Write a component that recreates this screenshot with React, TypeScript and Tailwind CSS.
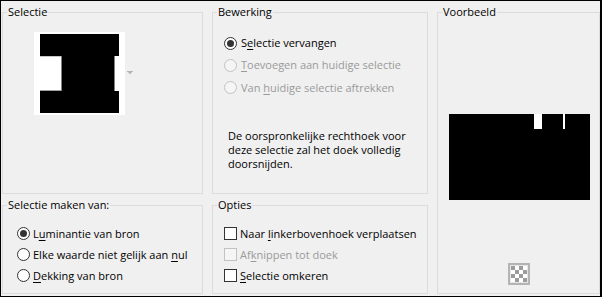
import type { ReactNode } from 'react';

const font = { fontFamily: '"Open Sans", "Segoe UI", sans-serif' };

function Group({
  title,
  className,
  children,
}: {
  title: string;
  className?: string;
  children: ReactNode;
}) {
  return (
    <fieldset className={`border border-[#dcdcdc] p-0 m-0 min-w-0 ${className ?? ''}`}>
      <legend className="ml-[4px] px-[1px] text-[11px] leading-[16px] text-black">{title}</legend>
      {children}
    </fieldset>
  );
}

function Radio({ checked, disabled }: { checked?: boolean; disabled?: boolean }) {
  return (
    <span
      className={`flex items-center justify-center w-[13px] h-[13px] rounded-full border shrink-0 ${
        disabled ? 'border-[#c2c2c2] bg-[#f5f5f5]' : 'border-[#333333] bg-white'
      }`}
    >
      {checked && <span className="w-[7px] h-[7px] rounded-full bg-[#333333]" />}
    </span>
  );
}

function Check({ disabled }: { disabled?: boolean }) {
  return (
    <span
      className={`w-[13px] h-[13px] border shrink-0 ${
        disabled ? 'border-[#c2c2c2] bg-[#f5f5f5]' : 'border-[#333333] bg-white'
      }`}
    />
  );
}

function Label({ pre, key1, post, disabled }: { pre: string; key1: string; post: string; disabled?: boolean }) {
  return (
    <span className={`text-[11px] leading-[16px] whitespace-nowrap ${disabled ? 'text-[#9a9a9a]' : 'text-black'}`}>
      {pre}
      <u className="underline-offset-[2px]">{key1}</u>
      {post}
    </span>
  );
}

function SelectionThumb() {
  return (
    <div className="flex items-start">
      <svg width="91" height="83" viewBox="0 0 91 83">
        <rect x="0" y="0" width="91" height="83" fill="#fff" />
        <rect x="6" y="2" width="79" height="79" fill="#000" />
        <rect x="6" y="24" width="21" height="35" fill="#fff" />
        <rect x="80" y="24" width="5" height="35" fill="#fff" />
        <line x1="27.5" y1="24" x2="27.5" y2="59" stroke="#808080" strokeWidth="1" />
        <line x1="6" y1="24.5" x2="27" y2="24.5" stroke="#c8c8c8" strokeWidth="1" />
        <line x1="6" y1="58.5" x2="27" y2="58.5" stroke="#a0a0a0" strokeWidth="1" />
        <line x1="80.5" y1="24" x2="80.5" y2="59" stroke="#808080" strokeWidth="1" />
      </svg>
      <svg width="6" height="4" viewBox="0 0 6 4" className="mt-[39px] ml-[2px]">
        <rect x="0" y="0" width="6" height="1" fill="#b4b4b4" />
        <path d="M1 1 L5 1 L3 3.5 Z" fill="#b4b4b4" />
      </svg>
    </div>
  );
}

function Preview() {
  return (
    <svg width="141" height="86" viewBox="0 0 141 86">
      <rect x="0" y="0" width="141" height="86" fill="#000" />
      <rect x="85" y="0" width="8" height="15" fill="#fff" />
      <rect x="114" y="0" width="2" height="15" fill="#fff" />
    </svg>
  );
}

function Checker() {
  return (
    <div className="w-[22px] h-[22px] border-2 border-[#b4b4b4] bg-[#e6e6e6] flex items-center justify-center">
      <svg width="16" height="16" viewBox="0 0 16 16">
        <rect width="16" height="16" fill="#fff" />
        {[0, 1, 2, 3].map((r) =>
          [0, 1, 2, 3].map((c) =>
            (r + c) % 2 === 0 ? <rect key={`${r}-${c}`} x={c * 4} y={r * 4} width="4" height="4" fill="#9c9c9c" /> : null
          )
        )}
      </svg>
    </div>
  );
}

export default function App() {
  return (
    <div
      style={font}
      className="w-[602px] h-[297px] bg-[#f0f0f0] border-t border-l border-b border-r-2 border-black pl-[1px] pt-[3px] pb-[2px] grid grid-cols-[201px_216px_163px] grid-rows-[190px_97px] gap-x-[9px] gap-y-[3px]"
    >
      <Group title="Selectie">
        <div className="pl-[31px] pt-[12px]">
          <SelectionThumb />
        </div>
      </Group>

      <Group title="Bewerking">
        <div className="pl-[11px] pt-[12px] flex flex-col">
          <div className="h-[22px] flex items-center gap-[4px]">
            <Radio checked />
            <Label pre="S" key1="e" post="lectie vervangen" />
          </div>
          <div className="h-[22px] flex items-center gap-[4px]">
            <Radio disabled />
            <Label pre="" key1="T" post="oevoegen aan huidige selectie" disabled />
          </div>
          <div className="h-[23px] flex items-center gap-[4px]">
            <Radio disabled />
            <Label pre="Van " key1="h" post="uidige selectie aftrekken" disabled />
          </div>
          <p className="mt-[30px] pl-[4px] text-[11px] leading-[14px] text-black">
            De oorspronkelijke rechthoek voor
            <br />
            deze selectie zal het doek volledig
            <br />
            doorsnijden.
          </p>
        </div>
      </Group>

      <Group title="Voorbeeld" className="row-span-2">
        <div className="flex flex-col items-center pt-[94px] pl-[1px]">
          <Preview />
          <div className="mt-[63px]">
            <Checker />
          </div>
        </div>
      </Group>

      <Group title="Selectie maken van:">
        <div className="pl-[14px] pt-[10px] flex flex-col">
          <div className="h-[21px] flex items-center gap-[3px]">
            <Radio checked />
            <Label pre="L" key1="u" post="minantie van bron" />
          </div>
          <div className="h-[21px] flex items-center gap-[3px]">
            <Radio />
            <Label pre="Elke waarde niet gelijk aan " key1="n" post="ul" />
          </div>
          <div className="h-[21px] flex items-center gap-[3px]">
            <Radio />
            <Label pre="" key1="D" post="ekking van bron" />
          </div>
        </div>
      </Group>

      <Group title="Opties">
        <div className="pl-[11px] pt-[10px] flex flex-col">
          <div className="h-[21px] flex items-center gap-[3px]">
            <Check />
            <Label pre="Naar " key1="l" post="inkerbovenhoek verplaatsen" />
          </div>
          <div className="h-[21px] flex items-center gap-[3px]">
            <Check disabled />
            <Label pre="Af" key1="k" post="nippen tot doek" disabled />
          </div>
          <div className="h-[21px] flex items-center gap-[3px]">
            <Check />
            <Label pre="" key1="S" post="electie omkeren" />
          </div>
        </div>
      </Group>
    </div>
  );
}
